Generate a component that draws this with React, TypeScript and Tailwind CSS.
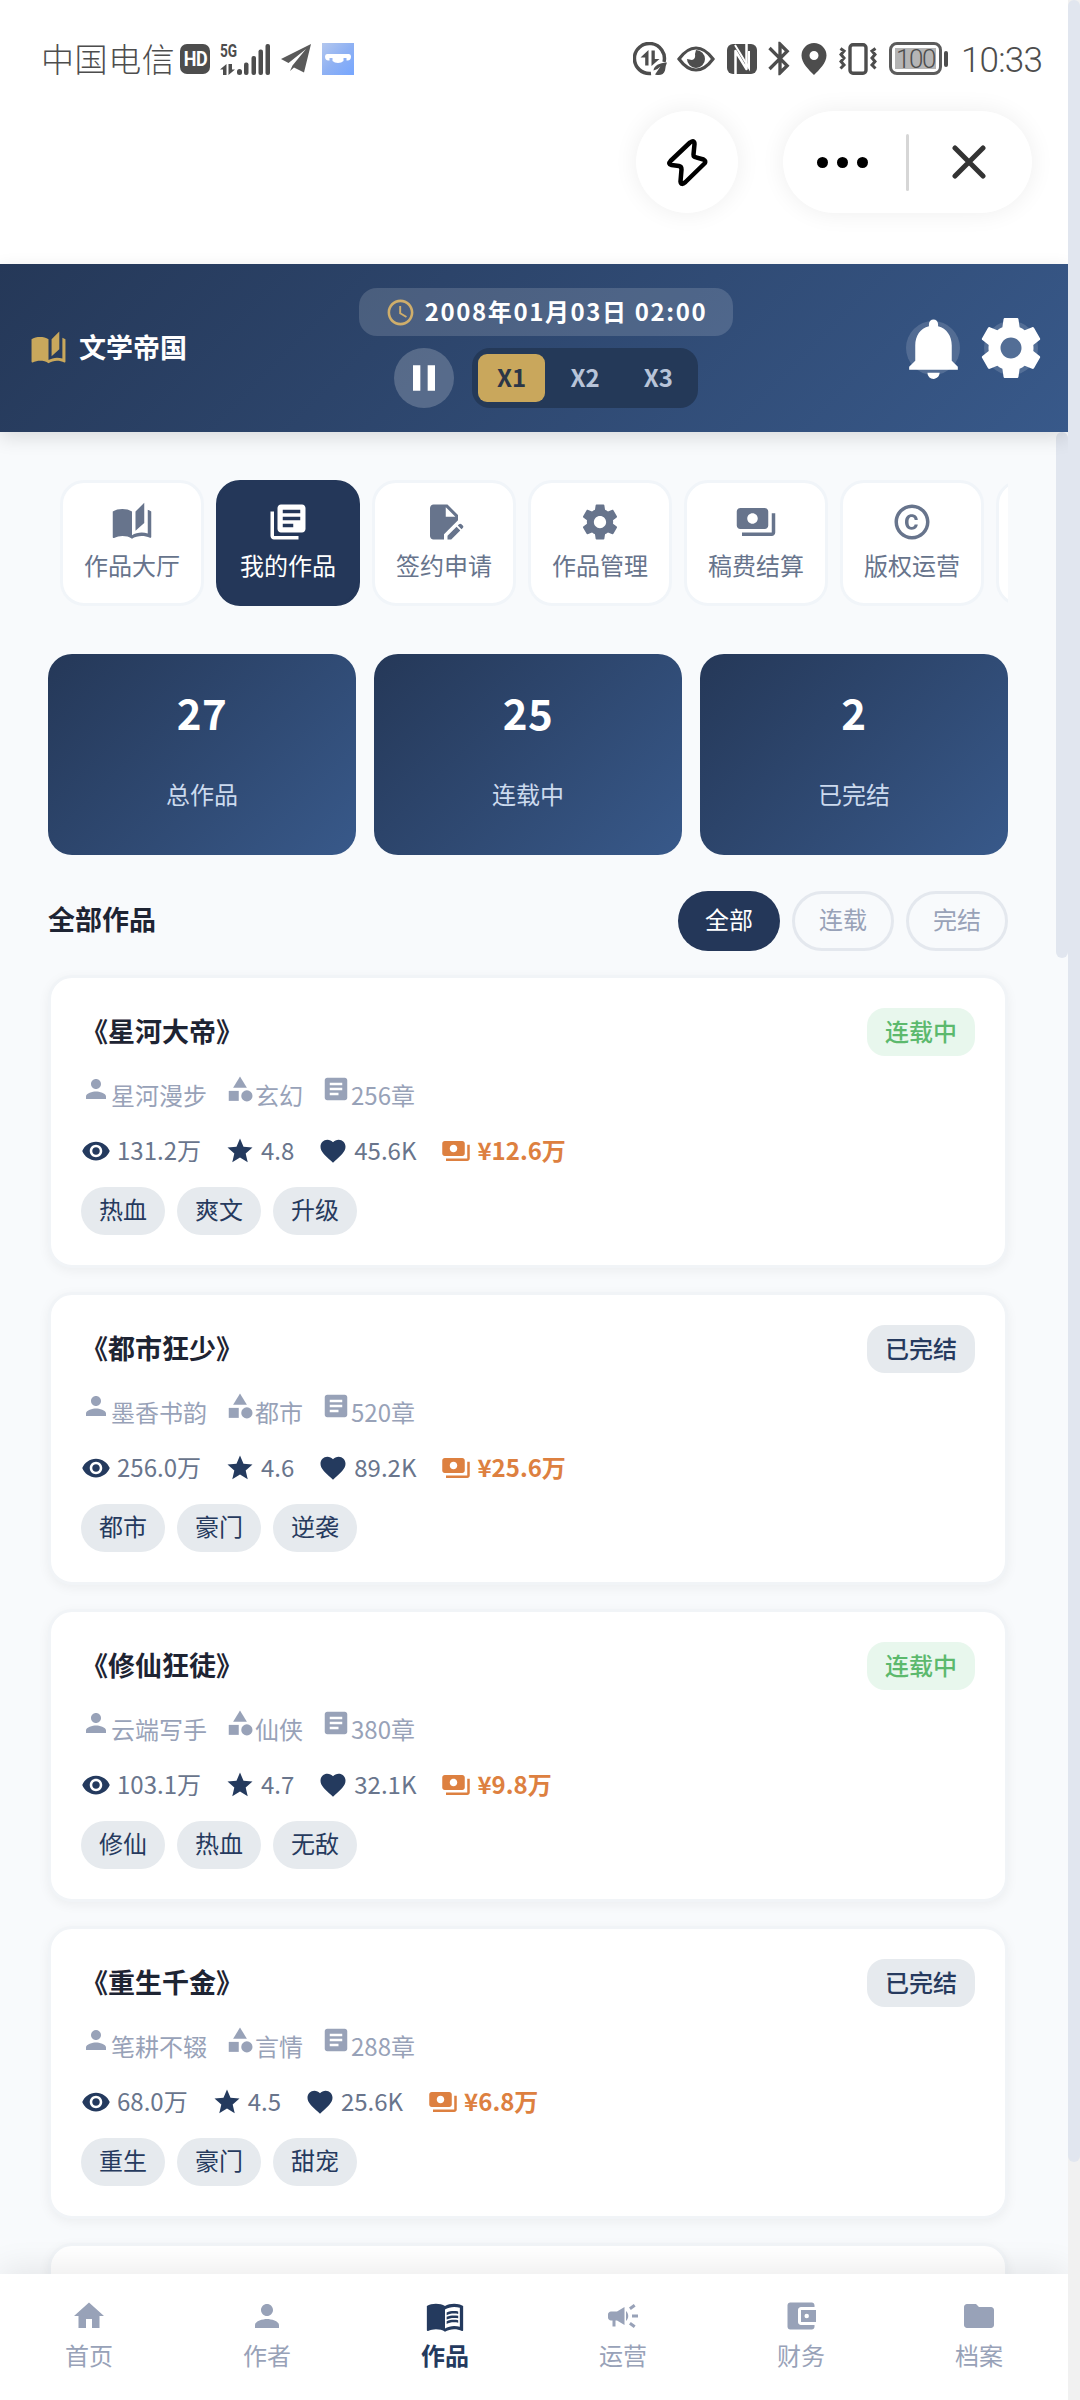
import type { ReactNode } from "react";
import type { IconType } from "react-icons";
import {
  MdAccessTime,
  MdArticle,
  MdAutoStories,
  MdBluetooth,
  MdCampaign,
  MdCategory,
  MdCopyright,
  MdEditDocument,
  MdFavorite,
  MdFolder,
  MdHome,
  MdLibraryBooks,
  MdMenuBook,
  MdNotifications,
  MdPause,
  MdPayments,
  MdPerson,
  MdStar,
  MdVisibility,
} from "react-icons/md";

interface Work {
  title: string;
  author: string;
  genre: string;
  chapters: string;
  views: string;
  rating: string;
  likes: string;
  income: string;
  finished: boolean;
  tags: string[];
}

const works: Work[] = [
  {
    title: "《星河大帝》",
    author: "星河漫步",
    genre: "玄幻",
    chapters: "256章",
    views: "131.2万",
    rating: "4.8",
    likes: "45.6K",
    income: "¥12.6万",
    finished: false,
    tags: ["热血", "爽文", "升级"],
  },
  {
    title: "《都市狂少》",
    author: "墨香书韵",
    genre: "都市",
    chapters: "520章",
    views: "256.0万",
    rating: "4.6",
    likes: "89.2K",
    income: "¥25.6万",
    finished: true,
    tags: ["都市", "豪门", "逆袭"],
  },
  {
    title: "《修仙狂徒》",
    author: "云端写手",
    genre: "仙侠",
    chapters: "380章",
    views: "103.1万",
    rating: "4.7",
    likes: "32.1K",
    income: "¥9.8万",
    finished: false,
    tags: ["修仙", "热血", "无敌"],
  },
  {
    title: "《重生千金》",
    author: "笔耕不辍",
    genre: "言情",
    chapters: "288章",
    views: "68.0万",
    rating: "4.5",
    likes: "25.6K",
    income: "¥6.8万",
    finished: true,
    tags: ["重生", "豪门", "甜宠"],
  },
];

const Gear = ({ className }: { className?: string }) => (
  <svg viewBox="0 0 24 24" fill="currentColor" className={className}>
    <path d="M19.43 12.98c.04-.32.07-.64.07-.98s-.03-.66-.07-.98l2.11-1.65c.19-.15.24-.42.12-.64l-2-3.46c-.12-.22-.39-.3-.61-.22l-2.49 1c-.52-.4-1.08-.73-1.69-.98l-.38-2.65C14.46 2.18 14.25 2 14 2h-4c-.25 0-.46.18-.49.42l-.38 2.65c-.61.25-1.17.59-1.69.98l-2.49-1c-.23-.09-.49 0-.61.22l-2 3.46c-.13.22-.07.49.12.64l2.11 1.65c-.04.32-.07.65-.07.98s.03.66.07.98l-2.11 1.65c-.19.15-.24.42-.12.64l2 3.46c.12.22.39.3.61.22l2.49-1c.52.4 1.08.73 1.69.98l.38 2.65c.03.24.24.42.49.42h4c.25 0 .46-.18.49-.42l.38-2.65c.61-.25 1.17-.59 1.69-.98l2.49 1c.23.09.49 0 .61-.22l2-3.46c.12-.22.07-.49-.12-.64l-2.11-1.65zM12 15.5c-1.93 0-3.5-1.57-3.5-3.5s1.57-3.5 3.5-3.5 3.5 1.57 3.5 3.5-1.57 3.5-3.5 3.5z" />
  </svg>
);

const Wallet = ({ className }: { className?: string }) => (
  <svg viewBox="0 0 24 24" fill="currentColor" fillRule="evenodd" className={className}>
    <path d="M21 18v1.200c0 1-.8 1.800-1.800 1.800H4.800c-1 0-1.800-.8-1.800-1.800V4.800C3 3.800 3.800 3 4.800 3h14.400c1 0 1.800.8 1.800 1.800V6h-9c-1.110 0-2 .9-2 2v8c0 1.100.89 2 2 2zM12 8h10v8H12zM15.800 10.500a1.500 1.500 0 1 0 0 3 1.500 1.500 0 1 0 0-3z" />
  </svg>
);

const tabs = [
  { name: "作品大厅", icon: <MdAutoStories className="size-[42px]" /> },
  { name: "我的作品", icon: <MdLibraryBooks className="size-[42px]" /> },
  { name: "签约申请", icon: <MdEditDocument className="size-[42px]" /> },
  { name: "作品管理", icon: <Gear className="size-[42px]" /> },
  { name: "稿费结算", icon: <MdPayments className="size-[42px]" /> },
  { name: "版权运营", icon: <MdCopyright className="size-[42px]" /> },
  { name: "", icon: null },
];

const stats = [
  { value: "27", label: "总作品" },
  { value: "25", label: "连载中" },
  { value: "2", label: "已完结" },
];

const navItems = [
  { name: "首页", icon: MdHome },
  { name: "作者", icon: MdPerson },
  { name: "作品", icon: MdMenuBook },
  { name: "运营", icon: MdCampaign },
  { name: "财务", icon: Wallet },
  { name: "档案", icon: MdFolder },
];

const StatusBar = () => (
  <div className="flex h-[117px] items-center justify-between pl-[41px] pr-[25px] text-[#4d4d4d]">
    <div className="flex items-center">
      <span className="text-[33px] leading-none font-light tracking-[0.6px]">中国电信</span>
      <span className="ml-[5px] flex h-[30px] w-[30px] items-center justify-center rounded-[7px] bg-[#4d4d4d] text-white">
        <span className="scale-y-[1.15] font-['Roboto'] text-[18px] leading-none font-bold tracking-[-0.5px]">HD</span>
      </span>
      {/* 5G signal */}
      <div className="ml-[10px] flex h-[32px] w-[51px] items-end justify-between">
        <div className="flex h-full w-[16px] flex-col justify-between">
          <span className="inline-block origin-left scale-x-[0.72] font-['Roboto'] text-[19px] leading-[15px] font-bold">
            5G
          </span>
          <svg viewBox="0 0 15 11" className="h-[11px] w-[15px]" fill="currentColor">
            <path d="M0 5.500 6.500 0v11H3V5.500zM15 5.500 8.500 11V0H12v5.500z" />
          </svg>
        </div>
        <svg viewBox="0 0 34 31" className="h-[31px] w-[34px]" fill="currentColor">
          <rect x="0" y="25" width="5" height="6" rx="2.500" />
          <rect x="7" y="18.500" width="4.500" height="12.500" rx="2" />
          <rect x="14.500" y="12" width="4.500" height="19" rx="2" />
          <rect x="21.500" y="5.500" width="4.500" height="25.500" rx="2" />
          <rect x="28.500" y="0" width="4.500" height="31" rx="2" />
        </svg>
      </div>
      <svg viewBox="0 0 30 29" className="ml-[10px] h-[29px] w-[30px]" fill="#5a5a5a">
        <path d="M30 0 0 15l7.500 4L25 5 11.500 21.500 9 27l4-3.500L23 28.500z" />
      </svg>
      <div className="ml-[11px] flex h-[32px] w-[32px] items-center justify-center bg-linear-to-br from-[#b3c7ee] via-[#8fb1f3] to-[#76a6ff]">
        <svg viewBox="0 0 26 9" className="h-[9px] w-[26px]" fill="white">
          <path d="M2 0h22q2 0 2 2.500 0 4-3.500 4h-1V4h-3v3q-2 2-5.500 2T7.500 7V4h-3v2.500h-1Q0 6.500 0 2.500 0 0 2 0z" />
        </svg>
      </div>
    </div>

    <div className="flex items-center">
      <svg viewBox="0 0 34 34" className="h-[34px] w-[34px]" fill="none" stroke="currentColor">
        <path d="M18 31.400A15 15 0 1 1 31 20" strokeWidth="3.500" />
        <g fill="currentColor" stroke="none">
          <path d="M7.500 15.500 15.500 8v15.500h-3.300v-8zM26.500 17 18.500 24V8.500h3.300V17z" />
          <path d="M34 20.500c-8 .5-13 3-13.500 8l4-1.500 3-2.500-5.500 8q8 2 10-4 .5-5 2-8z" />
        </g>
      </svg>
      <svg viewBox="0 0 38 26" className="ml-[10px] h-[26px] w-[38px]">
        <path d="M2 13Q10 2 19 2t17 11q-8 11-17 11T2 13z" fill="none" stroke="currentColor" strokeWidth="3.200" />
        <path d="M19 4a9 9 0 1 1-9 9l5 1q4-1 3-6z" fill="currentColor" />
      </svg>
      <svg viewBox="0 0 30 30" className="ml-[12px] h-[30px] w-[30px]">
        <rect width="30" height="30" rx="6" fill="currentColor" />
        <path d="M8.500 30V7l11 18V0" fill="none" stroke="white" strokeWidth="2.500" strokeLinejoin="round" />
        <path d="M8 1l14 23V7" fill="none" stroke="white" strokeWidth="2" />
      </svg>
      <MdBluetooth className="-mr-[9px] ml-[3px] h-[41px] w-[40px]" />
      <svg viewBox="0 0 26 32" className="ml-[10px] h-[32px] w-[26px]" fill="currentColor" fillRule="evenodd">
        <path d="M13 0a12.500 12.500 0 0 1 12.500 12.500C25.500 20 18 27 13 32 8 27 .5 20 .5 12.500A12.500 12.500 0 0 1 13 0zm0 8a4 4 0 1 0 0 9 4 4 0 1 0 0-9z" />
      </svg>
      <svg viewBox="0 0 38 32" className="ml-[12px] h-[32px] w-[38px]" fill="none" stroke="currentColor" strokeWidth="3">
        <rect x="11" y="1.800" width="16" height="28.400" rx="3" strokeWidth="3.400" />
        <path d="M1.500 5.500 5 8l-3 3.500L5 15l-3 3.500L5 22l-3.500 3.500M36.500 5.500 33 8l3 3.500-3 3.500 3 3.500-3 3.500 3.500 3.500" />
      </svg>
      <div className="ml-[12px] flex h-[33px] w-[53px] items-center justify-center rounded-[8px] border-3 border-[#5c5c5c] p-[3px]">
        <div className="flex h-full w-full items-center justify-center bg-[#b5b5b5] font-['Roboto'] text-[26px] leading-none font-light tracking-[-1.5px]">
          100
        </div>
      </div>
      <div className="ml-[2px] h-[16px] w-[4px] rounded-full bg-[#4d4d4d]" />
      <span className="mt-[3px] ml-[13px] w-[82px] font-['Roboto'] text-[35px] leading-none font-light tracking-[-0.8px] whitespace-nowrap">
        10:33
      </span>
    </div>
  </div>
);

// Mini program capsule buttons
const Capsule = () => (
  <div className="mt-[-6px] flex h-[102px] justify-end gap-[45px] pr-[36px]">
    <button className="flex h-[102px] w-[102px] items-center justify-center rounded-full bg-white shadow-[0_0_24px_rgba(0,0,0,0.07)]">
      <svg viewBox="0 0 54 54" className="size-[54px]" fill="none" stroke="#000" strokeWidth="4.500" strokeLinejoin="round">
        <path d="M30 7.500Q34.500 4.500 34.500 9L33.500 19.500Q33.500 22 36 22.300L43.500 24.500Q46.500 26 44.500 28.500L25.500 47Q21 51 20.500 46.500L21.500 34.500Q21.500 31.500 19 31L11.500 30Q7.500 29 10.500 26Z" />
      </svg>
    </button>
    <div className="flex h-[102px] w-[249px] items-center rounded-full bg-white shadow-[0_0_24px_rgba(0,0,0,0.07)]">
      <button className="flex h-full w-[123px] items-center justify-center gap-[9px] pr-[4px]">
        <span className="size-[11px] rounded-full bg-black" />
        <span className="size-[11px] rounded-full bg-black" />
        <span className="size-[11px] rounded-full bg-black" />
      </button>
      <span className="h-[57px] w-[3px] rounded-full bg-[#d6d6d6]" />
      <button className="flex h-full flex-1 items-center justify-center pr-[3px]">
        <svg viewBox="0 0 34 34" className="size-[34px]" stroke="#333" strokeWidth="5" strokeLinecap="round">
          <path d="M3 3l28 28M31 3L3 31" />
        </svg>
      </button>
    </div>
  </div>
);

const Header = () => (
  <header className="relative z-10 flex h-[168px] shrink-0 items-center bg-linear-135 from-[#253858] to-[#38598a] px-[30px] text-white shadow-[0_6px_18px_rgba(0,0,0,0.12)]">
    <div className="flex w-[329px] items-center gap-[12px]">
      <MdAutoStories className="size-[37px] text-[#c9a85c]" />
      <span className="pb-[3px] text-[27px] leading-none font-bold">文学帝国</span>
    </div>

    <div className="flex flex-col items-center gap-[12px]">
      <div className="flex h-[48px] w-[374px] items-center justify-center gap-[9px] rounded-[18px] bg-white/15">
        <MdAccessTime className="size-[31px] text-[#cfae6b]" />
        <span className="pb-[3px] text-[24px] leading-none font-bold tracking-[1.6px] whitespace-nowrap">
          2008年01月03日 02:00
        </span>
      </div>
      <div className="flex items-center gap-[18px]">
        <button className="flex size-[60px] items-center justify-center rounded-full bg-white/20">
          <MdPause className="size-[44px]" />
        </button>
        <div className="flex h-[60px] w-[226px] gap-[6px] rounded-[18px] bg-[#243958] p-[6px] text-[24px] font-bold">
          <button className="flex-1 rounded-[9px] bg-[#c9a75c] pb-[3px] text-[#2b3647]">X1</button>
          <button className="flex-1 pb-[3px] text-[#b8c4d8]">X2</button>
          <button className="flex-1 pb-[3px] text-[#b8c4d8]">X3</button>
        </div>
      </div>
    </div>

    <div className="ml-auto flex w-[132px] shrink-0 gap-[24px]">
      <button className="flex size-[54px] items-center justify-center rounded-full bg-white/15">
        <MdNotifications className="size-[73px] shrink-0" />
      </button>
      <button className="flex size-[54px] items-center justify-center rounded-full bg-white/15">
        <Gear className="size-[72px] shrink-0" />
      </button>
    </div>
  </header>
);

const Metric = ({ icon: Icon, children }: { icon: IconType; children: ReactNode }) => (
  <span className="flex items-center gap-[6px]">
    <Icon className="size-[30px] text-[#243a5e]" />
    <span className="pb-[3px] leading-[33px]">{children}</span>
  </span>
);

const Meta = ({ icon: Icon, children }: { icon: IconType; children: ReactNode }) => (
  <span className="flex h-[40px]">
    <Icon className="size-[30px]" />
    <span className="self-end pb-[2px] leading-[34px]">{children}</span>
  </span>
);

const WorkCard = ({ work }: { work: Work }) => (
  <div className="flex h-[293px] shrink-0 flex-col rounded-[24px] border-3 border-[#f1f4f7] bg-white p-[30px] shadow-[0_3px_12px_rgba(0,0,0,0.05)]">
    <div className="flex h-[48px] shrink-0 items-center justify-between">
      <h3 className="pb-[3px] text-[27px] leading-[44px] font-bold text-[#1e2433]">{work.title}</h3>
      <span
        className={`flex h-[48px] w-[108px] items-center justify-center rounded-[18px] pb-[3px] text-[24px] font-medium ${
          work.finished ? "bg-[#e6eaee] text-[#263a5e]" : "bg-[#e8f7ed] text-[#5cb96d]"
        }`}
      >
        {work.finished ? "已完结" : "连载中"}
      </span>
    </div>
    <div className="mt-[18px] flex gap-[18px] text-[24px] text-[#98a2b8]">
      <Meta icon={MdPerson}>{work.author}</Meta>
      <Meta icon={MdCategory}>{work.genre}</Meta>
      <Meta icon={MdArticle}>{work.chapters}</Meta>
    </div>
    <div className="mt-[19px] flex gap-[24px] text-[24px] text-[#69758c]">
      <Metric icon={MdVisibility}>{work.views}</Metric>
      <Metric icon={MdStar}>{work.rating}</Metric>
      <Metric icon={MdFavorite}>{work.likes}</Metric>
      <span className="ml-[1px] flex items-center gap-[6px] font-bold text-[#dd8040]">
        <MdPayments className="size-[30px]" />
        <span className="pb-[3px] leading-[33px]">{work.income}</span>
      </span>
    </div>
    <div className="mt-[18px] flex gap-[12px]">
      {work.tags.map((tag) => (
        <span
          key={tag}
          className="flex h-[48px] w-[84px] items-center justify-center rounded-full bg-[#e6eaee] pb-[4px] text-[24px] text-[#263a5e]"
        >
          {tag}
        </span>
      ))}
    </div>
  </div>
);

const BottomNav = () => (
  <nav className="relative z-10 grid h-[126px] shrink-0 grid-cols-6 bg-white shadow-[0_-6px_30px_rgba(0,0,0,0.08)]">
    {navItems.map(({ name, icon: Icon }) => {
      const active = name === "作品";
      return (
        <div
          key={name}
          className={`flex flex-col items-center pt-[24px] text-[24px] ${
            active ? "font-bold text-[#243a5e]" : "text-[#98a2b8]"
          }`}
        >
          <Icon className={`size-[36px] ${active ? "scale-110" : ""}`} />
          <span className="mt-[3px] leading-[36px]">{name}</span>
        </div>
      );
    })}
  </nav>
);

const App = () => {
  return (
    <div className="flex h-[2400px] w-[1080px] overflow-hidden bg-white font-['Noto_Sans_CJK_SC',sans-serif]">
      <div className="flex w-[1068px] flex-col overflow-hidden">
        <div className="h-[264px] shrink-0">
          <StatusBar />
          <Capsule />
        </div>
        <Header />

        <main className="flex min-h-0 flex-1 bg-[#f8fafc]">
          <div className="flex w-[1056px] flex-col overflow-hidden px-[48px] pt-[48px]">
            {/* Tabs, scroll sideways */}
            <div className="flex shrink-0 gap-[12px] overflow-hidden pl-[12px]">
              {tabs.map((tab, index) => (
                <button
                  key={index}
                  className={`flex h-[126px] w-[144px] shrink-0 flex-col items-center rounded-[24px] border-3 pt-[18px] text-[24px] ${
                    index === 1
                      ? "border-[#243759] bg-[#243759] text-white"
                      : "border-[#f1f5f9] bg-white text-[#67748c]"
                  }`}
                >
                  {tab.icon}
                  <span className="mt-[4px] leading-[36px]">{tab.name}</span>
                </button>
              ))}
            </div>

            <div className="mt-[48px] grid shrink-0 grid-cols-3 gap-[18px]">
              {stats.map((stat) => (
                <div
                  key={stat.label}
                  className="flex h-[201px] flex-col items-center rounded-[24px] bg-linear-135 from-[#253858] to-[#38598a] pt-[26px]"
                >
                  <span className="text-[42px] leading-[63px] font-bold tracking-[0.5px] text-white">{stat.value}</span>
                  <span className="mt-[33px] text-[24px] leading-[36px] text-[#ccdaee]">{stat.label}</span>
                </div>
              ))}
            </div>

            <div className="mt-[36px] flex h-[60px] shrink-0 items-center justify-between">
              <h2 className="pb-[3px] text-[27px] font-bold text-[#1e2433]">全部作品</h2>
              <div className="flex gap-[12px] text-[24px]">
                <button className="h-[60px] w-[102px] rounded-full bg-[#243759] pb-[4px] text-white">全部</button>
                <button className="h-[60px] w-[102px] rounded-full border-3 border-[#e4e8ee] pb-[4px] text-[#98a2b8]">连载</button>
                <button className="h-[60px] w-[102px] rounded-full border-3 border-[#e4e8ee] pb-[4px] text-[#98a2b8]">完结</button>
              </div>
            </div>

            <div className="mt-[24px] flex flex-col gap-[24px]">
              {works.map((work) => (
                <WorkCard key={work.title} work={work} />
              ))}
              <div className="h-[293px] shrink-0 rounded-[24px] border-3 border-[#f1f4f7] bg-white shadow-[0_3px_12px_rgba(0,0,0,0.05)]" />
            </div>
          </div>
          <div className="w-[12px]">
            <div className="h-[526px] rounded-[6px] bg-[#e1e6ef]" />
          </div>
        </main>

        <BottomNav />
      </div>

      {/* Page scrollbar */}
      <div className="w-[12px] bg-[#f1f1f1]">
        <div className="h-[2162px] rounded-[6px] bg-[#e1e6ef]" />
      </div>
    </div>
  );
};

export default App;
